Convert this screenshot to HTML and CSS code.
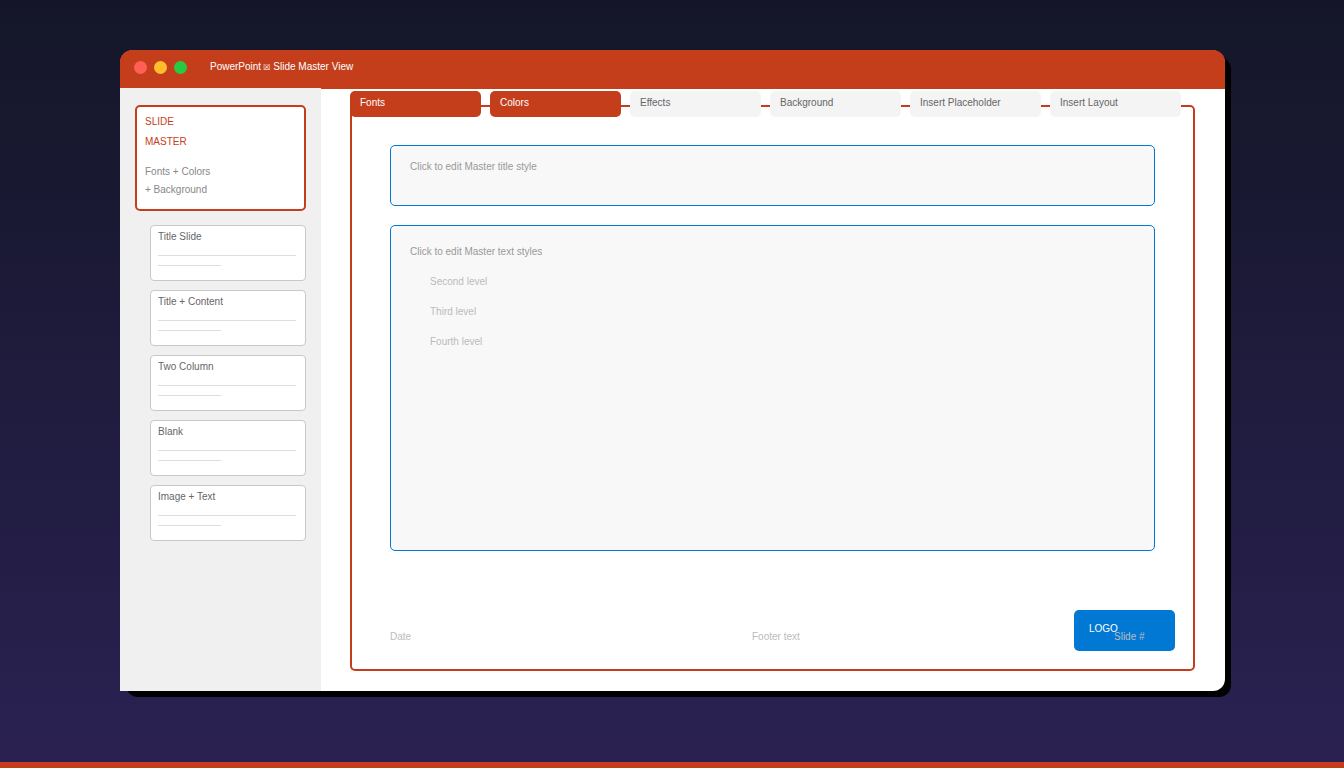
FILE: index.html
```html
<!DOCTYPE html>
<html lang="en">
<head>
    <meta charset="utf-8">
    <title>PowerPoint Slide Master View</title>
    <link rel="stylesheet" href="styles.css">
</head>

<body>
    <div class="window">
        <header class="titlebar">
            <div class="dots">
                <button class="dot close" aria-label="Close"></button>
                <button class="dot minimize" aria-label="Minimize"></button>
                <button class="dot maximize" aria-label="Maximize"></button>
            </div>
            <div class="title">PowerPoint<span class="box">☒</span>Slide Master View</div>
        </header>

        <div class="content">
            <nav class="sidebar">
                <button class="master">
                    <span class="master-name">SLIDE<br>MASTER</span>
                    <span class="master-info">Fonts + Colors<br>+ Background</span>
                </button>
                <div class="layouts">
                    <button class="layout">Title Slide<span class="line"></span><span class="line short"></span></button>
                    <button class="layout">Title + Content<span class="line"></span><span class="line short"></span></button>
                    <button class="layout">Two Column<span class="line"></span><span class="line short"></span></button>
                    <button class="layout">Blank<span class="line"></span><span class="line short"></span></button>
                    <button class="layout">Image + Text<span class="line"></span><span class="line short"></span></button>
                </div>
            </nav>

            <main class="editor">
                <div class="toolbar">
                    <button class="tab active">Fonts</button>
                    <button class="tab active">Colors</button>
                    <button class="tab">Effects</button>
                    <button class="tab">Background</button>
                    <button class="tab">Insert Placeholder</button>
                    <button class="tab">Insert Layout</button>
                </div>

                <section class="slide">
                    <div class="placeholder slide-title">Click to edit Master title style</div>
                    <div class="placeholder slide-body">
                        <div>Click to edit Master text styles</div>
                        <div class="level">Second level</div>
                        <div class="level">Third level</div>
                        <div class="level">Fourth level</div>
                    </div>
                    <div class="logo">LOGO</div>
                    <footer class="slide-footer">
                        <span>Date</span>
                        <span>Footer text</span>
                        <span>Slide #</span>
                    </footer>
                </section>
            </main>
        </div>
    </div>
</body>
</html>
```

FILE: styles.css
```css
* {
    box-sizing: border-box;
}

body {
    margin: 0;
    min-height: 100vh;
    display: flex;
    padding: 50px 119px 71px 120px;
    border-bottom: 6px solid #c43e1c;
    background: linear-gradient(#141628, #2a2152);
    font-family: "Liberation Sans", Arial, sans-serif;
    font-size: 10px;
    line-height: 16px;
    color: #666;
}

button {
    font: inherit;
    color: inherit;
    text-align: left;
    border: none;
    padding: 0;
    cursor: pointer;
}

.window {
    flex: 1;
    display: flex;
    flex-direction: column;
    background: #fff;
    border-radius: 14px 14px 12px 12px;
    box-shadow: 6px 6px 0 #000;
}

/* Title bar */
.titlebar {
    display: flex;
    align-items: center;
    gap: 23px;
    height: 39px;
    padding: 0 14px 4px;
    background: #c43e1c;
    border-radius: 12px 12px 0 0;
    color: #fff;
}

.dots {
    display: flex;
    gap: 7px;
}

.dot {
    width: 13px;
    height: 13px;
    border-radius: 50%;
}

.close {
    background: #ff5f57;
}

.minimize {
    background: #ffbd2e;
}

.maximize {
    background: #28ca42;
}

.box {
    padding: 0 3px 0 2px;
    font-family: "DejaVu Sans", sans-serif;
    font-size: 8px;
}

.content {
    flex: 1;
    display: flex;
}

/* Sidebar */
.sidebar {
    width: 201px;
    margin-top: -1px;
    padding: 17px 15px;
    background: #f0f0f0;
}

.master {
    display: block;
    width: 100%;
    padding: 5px 8px 10px;
    background: #fff;
    border: 2px solid #c43e1c;
    border-radius: 5px;
}

.master-name {
    display: block;
    line-height: 20px;
    color: #c43e1c;
}

.master-info {
    display: block;
    margin-top: 11px;
    line-height: 18px;
    color: #888;
}

.layouts {
    display: flex;
    flex-direction: column;
    gap: 9px;
    margin: 14px 0 0 15px;
}

.layout {
    height: 56px;
    padding: 0 9px 12px 7px;
    background: #fff;
    border: 1px solid #c8c8c8;
    border-radius: 4px;
}

.line {
    display: block;
    height: 1px;
    margin-top: 10px;
    background: #ddd;
}

.short {
    width: 63px;
    margin-top: 9px;
}

/* Editor */
.editor {
    flex: 1;
    display: flex;
    flex-direction: column;
    padding: 2px 30px 20px 29px;
}

.toolbar {
    display: flex;
    gap: 9px;
    margin-bottom: -12px;
    padding-right: 14px;
    z-index: 1;
}

.tab {
    flex: 1 1 0;
    height: 26px;
    padding: 0 10px 3px;
    background: #f4f4f4;
    border-radius: 5px;
    white-space: nowrap;
}

.tab.active {
    background: #c43e1c;
    color: #fff;
}

.slide {
    position: relative;
    flex: 1;
    display: flex;
    flex-direction: column;
    gap: 19px;
    padding: 38px 38px 24px;
    border: 2px solid #c43e1c;
    border-radius: 5px;
}

.placeholder {
    padding: 0 19px;
    background: #f8f8f8;
    border: 1px solid #0078d4;
    border-radius: 5px;
    color: #999;
}

.slide-title {
    height: 61px;
    padding-top: 13px;
}

.slide-body {
    flex: 1;
    padding-top: 11px;
    line-height: 30px;
}

.level {
    padding-left: 20px;
    color: #bbb;
}

.slide-footer {
    display: grid;
    grid-template-columns: 1fr 1fr 41px;
    margin-top: 59px;
    color: #bbb;
    z-index: 1;
}

/* Logo sits over the bottom right corner of the slide */
.logo {
    position: absolute;
    right: 18px;
    bottom: 18px;
    width: 101px;
    height: 41px;
    padding: 11px 15px;
    background: #0078d4;
    border-radius: 5px;
    color: #fff;
}
```
